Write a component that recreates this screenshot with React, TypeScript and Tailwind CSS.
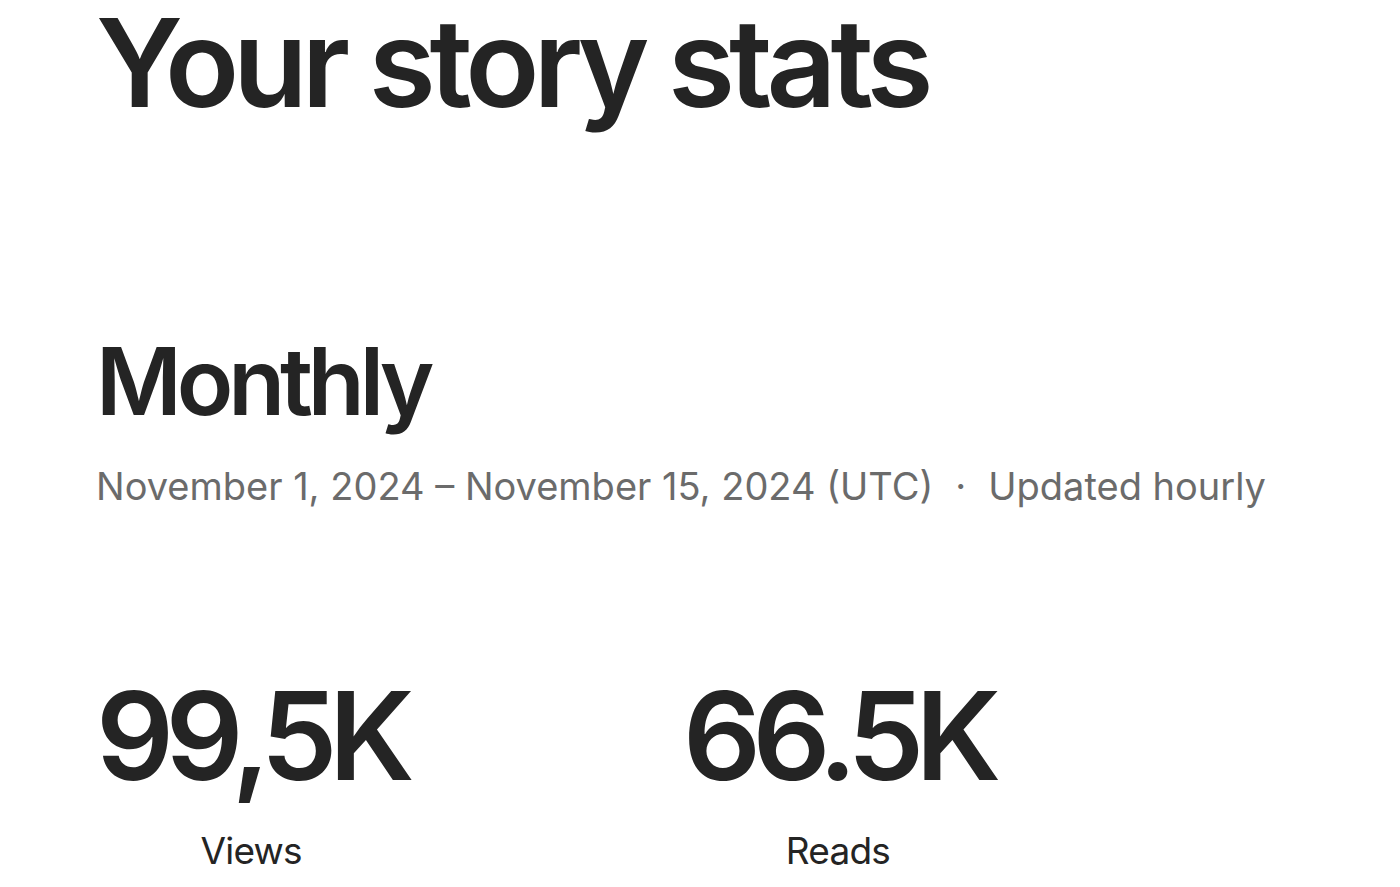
const font = { fontFamily: 'Inter, "Liberation Sans", sans-serif' };

const Stat = ({ value, label }: { value: string; label: string }) => (
  <div className="flex w-fit flex-col items-center">
    <div className="text-[122px] font-semibold leading-none tracking-[-0.07em] text-[#242424]">{value}</div>
    <div className="mt-[35px] text-[37px] leading-none tracking-[-0.02em] text-[#242424]">{label}</div>
  </div>
);

export default function App() {
  return (
    <div className="min-h-screen bg-white pt-[2px] pl-[96px]" style={font}>
      <h1 className="text-[122px] font-semibold leading-none tracking-[-0.05em] text-[#242424]">
        Your story stats
      </h1>

      <h2 className="mt-[211px] text-[93px] font-semibold leading-none tracking-[-0.055em] text-[#242424]">
        Monthly
      </h2>
      <p className="mt-[39px] text-[38px] leading-none tracking-normal text-[#6b6b6b]">
        November 1, 2024 – November 15, 2024 (UTC)
        <span className="mx-[22px]">·</span>
        Updated hourly
      </p>

      <div className="mt-[170px] grid grid-cols-[587px_auto]">
        <Stat value="99,5K" label="Views" />
        <Stat value="66.5K" label="Reads" />
      </div>
    </div>
  );
}
